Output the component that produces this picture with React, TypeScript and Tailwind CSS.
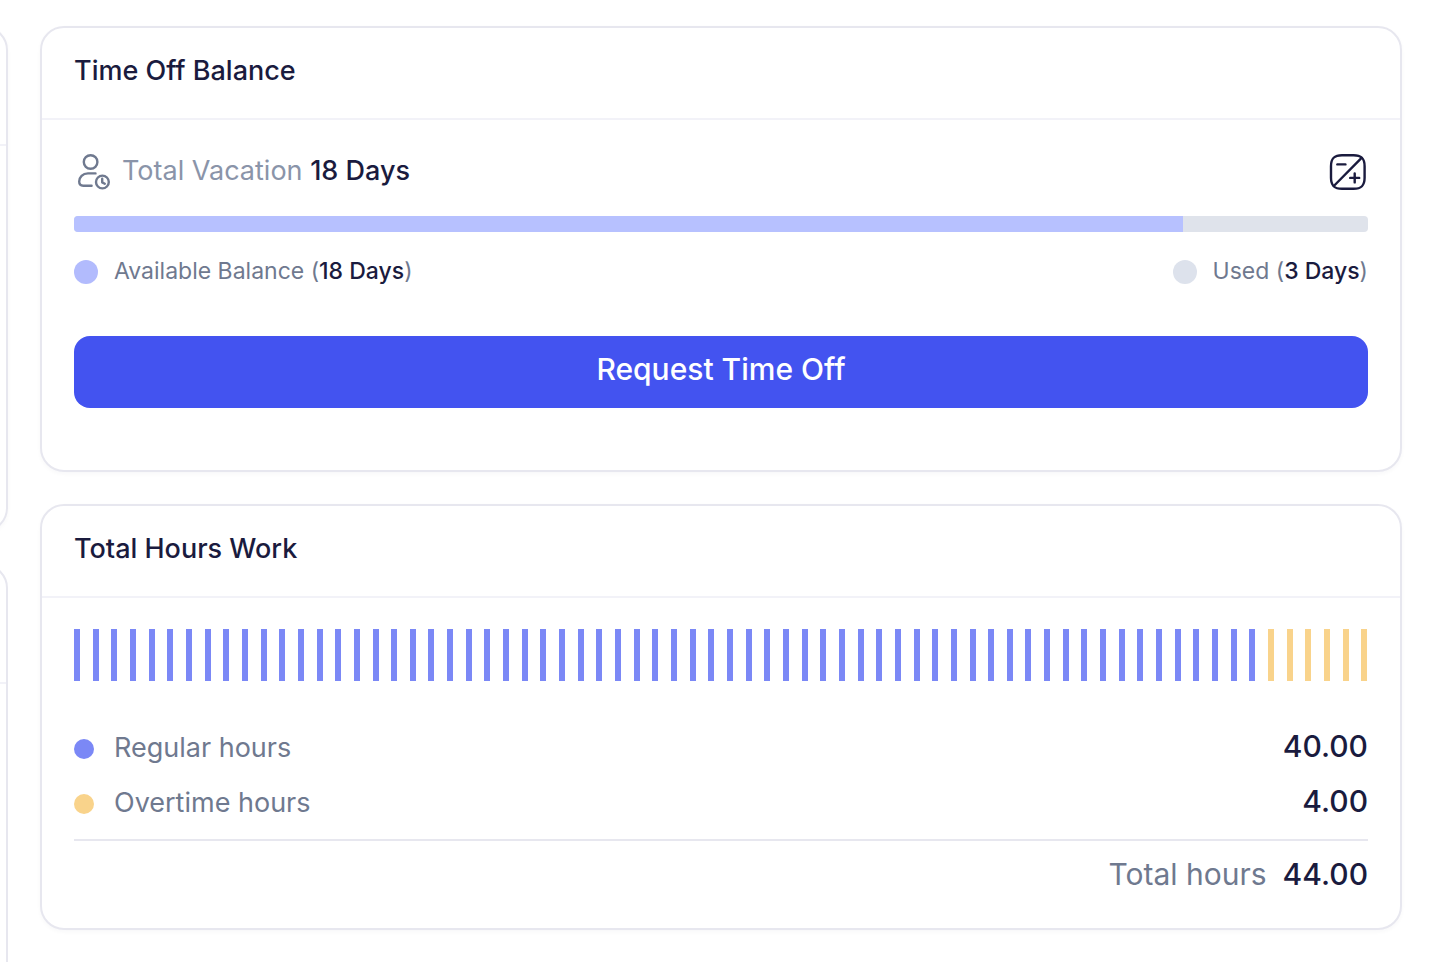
import type { ReactNode } from 'react'

const REGULAR_BARS = 64
const OVERTIME_BARS = 6

interface CardProps {
  title: string
  children: ReactNode
}

function Card({ title, children }: CardProps) {
  return (
    <section className="rounded-3xl border-2 border-[#e7e7ef] bg-white shadow-[0_2px_4px_rgba(20,20,60,0.03)]">
      <header className="flex h-[92px] items-center border-b-2 border-[#f2f2f8] px-8 pb-1">
        <h2 className="text-[27px] font-medium text-[#1a1b3e]">{title}</h2>
      </header>
      {children}
    </section>
  )
}

function UserClockIcon() {
  return (
    <svg
      className="size-10 shrink-0 text-[#6f798f]"
      viewBox="0 0 40 40"
      fill="none"
      stroke="currentColor"
      strokeWidth="2.4"
      strokeLinecap="round"
      strokeLinejoin="round"
      aria-hidden="true"
    >
      <circle cx="16.6" cy="10" r="6.8" />
      <path d="M21.5 21.4H14C8.6 21.4 5.2 25 5.2 29.6C5.2 32.1 6.8 33.7 9.2 33.7H17.6" />
      <circle cx="28.4" cy="30" r="6.4" />
      <path d="M28.2 26.8V30.4L30.8 31.8" />
    </svg>
  )
}

function PlusMinusIcon() {
  return (
    <svg
      className="size-10"
      viewBox="0 0 40 40"
      fill="none"
      stroke="currentColor"
      strokeWidth="2.4"
      strokeLinecap="round"
      aria-hidden="true"
    >
      <path d="M14 3.2H25.6C33.4 3.2 36.6 6.4 36.6 14.2V25.8C36.6 33.6 33.4 36.8 25.6 36.8H14C6.2 36.8 3 33.6 3 25.8V14.2C3 6.4 6.2 3.2 14 3.2Z" />
      <path d="M5.8 34L33.6 5.8" />
      <path d="M9.4 12.4H17.4" />
      <path d="M22.2 25.9H31.2M26.7 21.4V30.4" />
    </svg>
  )
}

function TimeOffBalance() {
  return (
    <Card title="Time Off Balance">
      <div className="px-8 pt-8 pb-[62px]">
        <div className="flex h-10 items-center justify-between">
          <div className="flex items-center gap-2">
            <UserClockIcon />
            <p className="pb-0.5 text-[27px] text-[#8a94a9]">
              Total Vacation <span className="font-medium text-[#1a1b3e]">18 Days</span>
            </p>
          </div>
          <button type="button" aria-label="Adjust balance" className="text-[#1a1b3e]">
            <PlusMinusIcon />
          </button>
        </div>

        {/* Balance bar */}
        <div className="mt-6 flex h-4 overflow-hidden rounded-sm bg-[#dfe3eb]">
          <div className="w-6/7 bg-[#b7c1ff]" />
        </div>

        <div className="mt-6 flex h-8 items-center justify-between text-[23px] text-[#6f798f]">
          <div className="flex items-center gap-4">
            <span className="size-6 rounded-full bg-[#b2bbfd]" />
            <p className="pb-0.5">
              Available Balance (<span className="font-medium text-[#1a1b3e]">18 Days</span>)
            </p>
          </div>
          <div className="flex items-center gap-4">
            <span className="size-6 rounded-full bg-[#dde2ec]" />
            <p className="pb-0.5">
              Used (<span className="font-medium text-[#1a1b3e]">3 Days</span>)
            </p>
          </div>
        </div>

        <button
          type="button"
          className="mt-12 h-18 w-full rounded-2xl bg-[#4353f0] pb-1.5 text-[30px] font-medium text-white"
        >
          Request Time Off
        </button>
      </div>
    </Card>
  )
}

interface HoursRowProps {
  label: string
  value: string
  dot: string
}

function HoursRow({ label, value, dot }: HoursRowProps) {
  return (
    <div className="flex h-[55px] items-center justify-between">
      <dt className="flex items-center gap-5 text-[27px] text-[#6f798f]">
        <span className={`size-5 rounded-full ${dot}`} />
        {label}
      </dt>
      <dd className="pb-1 text-[30px] font-medium text-[#1a1b3e]">{value}</dd>
    </div>
  )
}

function TotalHoursWork() {
  return (
    <Card title="Total Hours Work">
      <div className="px-8 pt-[31px] pb-5">
        <div className="flex h-[52px] justify-between">
          {Array.from({ length: REGULAR_BARS + OVERTIME_BARS }, (_, i) => (
            <span key={i} className={`w-[6px] ${i < REGULAR_BARS ? 'bg-[#7b88f6]' : 'bg-[#f9d38b]'}`} />
          ))}
        </div>

        <dl className="mt-10">
          <HoursRow label="Regular hours" value="40.00" dot="bg-[#7b88f6]" />
          <HoursRow label="Overtime hours" value="4.00" dot="bg-[#f9d38b]" />
          <div className="mt-2 flex h-[69px] items-center justify-end gap-4 border-t-2 border-[#e7e7ef] text-[30px]">
            <dt className="text-[#6f798f]">Total hours</dt>
            <dd className="font-medium text-[#1a1b3e]">44.00</dd>
          </div>
        </dl>
      </div>
    </Card>
  )
}

export default function App() {
  return (
    <main className="flex h-screen overflow-hidden bg-white pr-9 font-['Inter',sans-serif]">
      {/* Edge of the neighbouring column */}
      <div className="flex w-3 shrink-0 justify-end overflow-hidden pt-[26px] pr-1">
        <div className="flex w-64 shrink-0 flex-col gap-8">
          <div className="h-[506px] shrink-0 rounded-3xl border-2 border-[#e7e7ef] shadow-[0_2px_4px_rgba(20,20,60,0.03)]">
            <div className="h-[118px] border-b-2 border-[#f2f2f8]" />
          </div>
          <div className="h-[506px] shrink-0 rounded-3xl border-2 border-[#e7e7ef]">
            <div className="h-[118px] border-b-2 border-[#f2f2f8]" />
          </div>
        </div>
      </div>

      <div className="flex min-w-0 flex-1 flex-col gap-8 pt-[26px] pl-7">
        <TimeOffBalance />
        <TotalHoursWork />
      </div>
    </main>
  )
}
